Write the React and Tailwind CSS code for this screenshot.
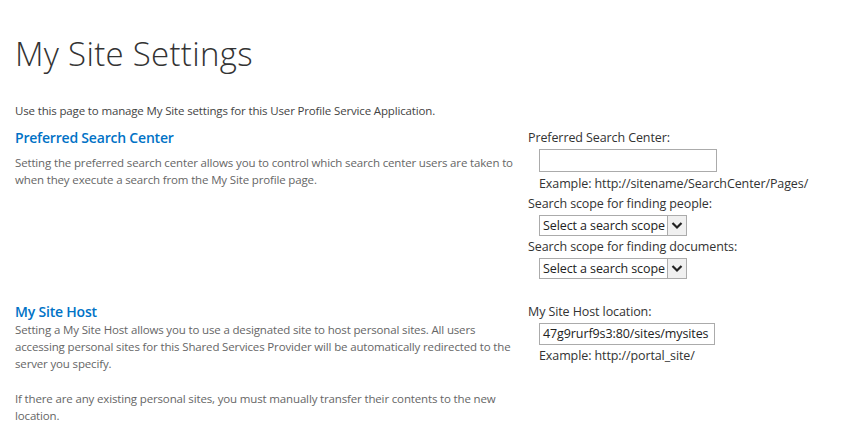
import React from "react";

function Chevron() {
  return (
    <svg width="12" height="9" viewBox="0 0 12 9" className="block">
      <path d="M1.5 2 L6 6.5 L10.5 2" fill="none" stroke="#222" strokeWidth="2.2" />
    </svg>
  );
}

function ScopeSelect() {
  return (
    <div className="ml-[11px] flex h-[21px] w-[148px] items-stretch border border-[#ababab] bg-white">
      <span className="flex-1 overflow-hidden whitespace-nowrap pl-[3px] leading-[19px] text-[#222]">Select a search scope</span>
      <span className="flex w-[19px] items-center justify-center border-l border-[#ababab] bg-[#f0f0f0]">
        <Chevron />
      </span>
    </div>
  );
}

function Section({ title, children, right, gap }) {
  return (
    <div className="grid grid-cols-[513px_1fr]">
      <div className="pr-3">
        <h3 className="text-[14px] font-semibold leading-[22px] tracking-[-0.2px] text-[#0072c6]">{title}</h3>
        <div className={`${gap} text-[11.5px] leading-[17px] tracking-[-0.15px] text-[#666]`}>{children}</div>
      </div>
      <div className="pt-[2px] text-[12.5px] leading-[18px] tracking-[-0.1px] text-[#333]">{right}</div>
    </div>
  );
}

export default function App() {
  return (
    <div className="h-[439px] w-[841px] overflow-hidden bg-white px-[15px] font-['Open_Sans','Noto_Sans',sans-serif]">
      <h1 className="pt-[29px] text-[33px] font-light leading-[50px] tracking-[0.3px] text-[#333]">My Site Settings</h1>
      <p className="mt-[23px] text-[11.5px] leading-[17px] tracking-[-0.15px] text-[#444]">
        Use this page to manage My Site settings for this User Profile Service Application.
      </p>
      <div className="mt-[8px]">
        <Section
          title="Preferred Search Center"
          gap="mt-[5px]"
          right={
            <div>
              <div>Preferred Search Center:</div>
              <div className="ml-[11px] mt-[2px] h-[23px] w-[178px] border border-[#ababab] bg-white" />
              <div className="ml-[11px] mt-[3px]">Example: http://sitename/SearchCenter/Pages/</div>
              <div className="mt-[2px]">Search scope for finding people:</div>
              <div className="mt-[2px]"><ScopeSelect /></div>
              <div className="mt-[2px]">Search scope for finding documents:</div>
              <div className="mt-[2px]"><ScopeSelect /></div>
            </div>
          }
        >
          Setting the preferred search center allows you to control which search center users are taken to when they execute a search from the My Site profile page.
        </Section>
      </div>
      <div className="mt-[22px]">
        <Section
          title="My Site Host"
          gap="mt-[-2px]"
          right={
            <div>
              <div>My Site Host location:</div>
              <div className="ml-[11px] mt-[2px] flex h-[22px] w-[176px] items-center overflow-hidden whitespace-nowrap border border-[#ababab] bg-white pl-[3px] text-[#222]">
                47g9rurf9s3:80/sites/mysites
              </div>
              <div className="ml-[11px] mt-[2px]">Example: http://portal_site/</div>
            </div>
          }
        >
          <p>
            Setting a My Site Host allows you to use a designated site to host personal sites. All users accessing personal sites for this Shared Services Provider will be automatically redirected to the server you specify.
          </p>
          <p className="mt-[18px]">
            If there are any existing personal sites, you must manually transfer their contents to the new location.
          </p>
        </Section>
      </div>
    </div>
  );
}
